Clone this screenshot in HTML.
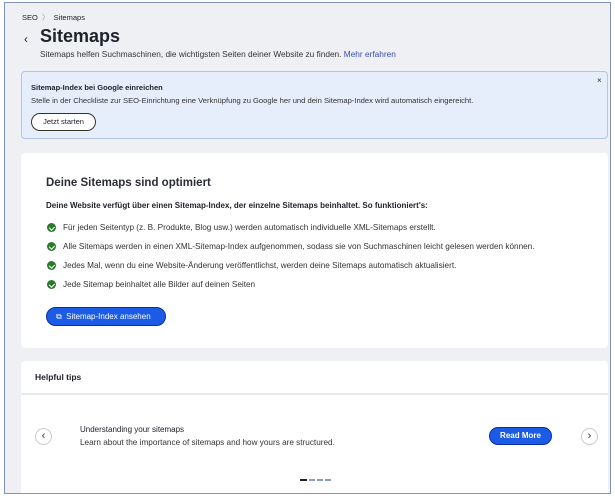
<!DOCTYPE html>
<html><head><meta charset="utf-8"><style>
*{margin:0;padding:0;box-sizing:border-box}
body{width:615px;height:501px;background:#fff;font-family:"Liberation Sans",sans-serif;color:#20232b;position:relative;overflow:hidden}
.frame{position:absolute;left:4px;top:2px;width:607px;height:492px;border:1px solid #7f93b8;background:#eef0f4;overflow:hidden}
.a{position:absolute;white-space:nowrap}
.card{position:absolute;background:#fff;border-radius:4px}
.chk{position:absolute;width:9px;height:9px;border-radius:50%;background:#2a7a2c}
.chk:after{content:"";position:absolute;left:2.6px;top:1.6px;width:2.5px;height:4px;border:solid #fff;border-width:0 1.4px 1.4px 0;transform:rotate(45deg)}
.it{font-size:8.2px;color:#333}
.circ{position:absolute;width:17px;height:17px;border-radius:50%;border:1px solid #c8ccd4;background:#fff;font-size:11px;text-align:center;line-height:14px;color:#333}
</style></head><body>
<div class="frame">
<div class="a" style="left:17px;top:9px;font-size:7.5px">SEO &nbsp;<span style="color:#999">〉</span>&nbsp; Sitemaps</div>
<div class="a" style="left:19px;top:29px;font-size:12px">‹</div>
<div class="a" style="left:35px;top:23px;font-size:18px;font-weight:bold">Sitemaps</div>
<div class="a" style="left:35px;top:46px;font-size:8.3px;color:#333">Sitemaps helfen Suchmaschinen, die wichtigsten Seiten deiner Website zu finden. <span style="color:#3a4db3">Mehr erfahren</span></div>
<div class="card" style="left:16px;top:68px;width:587px;height:68px;background:#e6eefb;border:1px solid #b4c6e6"></div>
<div class="a" style="left:26px;top:80px;font-size:7.5px;font-weight:bold">Sitemap-Index bei Google einreichen</div>
<div class="a" style="left:26px;top:93px;font-size:7.6px;color:#333">Stelle in der Checkliste zur SEO-Einrichtung eine Verknüpfung zu Google her und dein Sitemap-Index wird automatisch eingereicht.</div>
<div class="a" style="left:592px;top:73px;font-size:8px">×</div>
<div class="a" style="left:26px;top:110px;width:65px;height:18px;border:1px solid #333;border-radius:9px;font-size:7.5px;text-align:center;line-height:16px;background:#fff">Jetzt starten</div>
<div class="card" style="left:16px;top:150px;width:587px;height:195px"></div>
<div class="a" style="left:41px;top:174px;font-size:11.5px;font-weight:bold;color:#2a2d35">Deine Sitemaps sind optimiert</div>
<div class="a" style="left:41px;top:198px;font-size:8px;font-weight:bold">Deine Website verfügt über einen Sitemap-Index, der einzelne Sitemaps beinhaltet. So funktioniert's:</div>
<div class="chk" style="left:42px;top:220px"></div><div class="a it" style="left:58px;top:220px">Für jeden Seitentyp (z. B. Produkte, Blog usw.) werden automatisch individuelle XML-Sitemaps erstellt.</div>
<div class="chk" style="left:42px;top:239px"></div><div class="a it" style="left:58px;top:239px">Alle Sitemaps werden in einen XML-Sitemap-Index aufgenommen, sodass sie von Suchmaschinen leicht gelesen werden können.</div>
<div class="chk" style="left:42px;top:258px"></div><div class="a it" style="left:58px;top:258px">Jedes Mal, wenn du eine Website-Änderung veröffentlichst, werden deine Sitemaps automatisch aktualisiert.</div>
<div class="chk" style="left:42px;top:277px"></div><div class="a it" style="left:58px;top:277px">Jede Sitemap beinhaltet alle Bilder auf deinen Seiten</div>
<div class="a" style="left:41px;top:304px;width:120px;height:19px;background:#1b5be6;border:1px solid #0a2fa0;border-radius:10px;color:#fff;font-size:8px;line-height:17px;padding-left:9px">⧉&nbsp; Sitemap-Index ansehen</div>
<div class="card" style="left:16px;top:358px;width:587px;height:140px"></div>
<div style="position:absolute;left:16px;top:390px;width:587px;height:2px;background:#e6e8ec"></div>
<div class="a" style="left:30px;top:369px;font-size:8.5px;font-weight:bold">Helpful tips</div>
<div class="circ" style="left:30px;top:425px">‹</div>
<div class="circ" style="left:576px;top:425px">›</div>
<div class="a" style="left:75px;top:422px;font-size:8px">Understanding your sitemaps</div>
<div class="a" style="left:75px;top:435px;font-size:8.2px;color:#333">Learn about the importance of sitemaps and how yours are structured.</div>
<div class="a" style="left:484px;top:424px;width:63px;height:18px;background:#1b5be6;border:1px solid #0a2fa0;border-radius:9px;color:#fff;font-size:8px;font-weight:bold;text-align:center;line-height:16px">Read More</div>
<div style="position:absolute;left:295px;top:476px;width:7px;height:1.5px;background:#222"></div>
<div style="position:absolute;left:304px;top:476px;width:6px;height:1.5px;background:#8a9cc8"></div>
<div style="position:absolute;left:312px;top:476px;width:6px;height:1.5px;background:#8a9cc8"></div>
<div style="position:absolute;left:320px;top:476px;width:6px;height:1.5px;background:#8a9cc8"></div>
</div>
</body></html>
